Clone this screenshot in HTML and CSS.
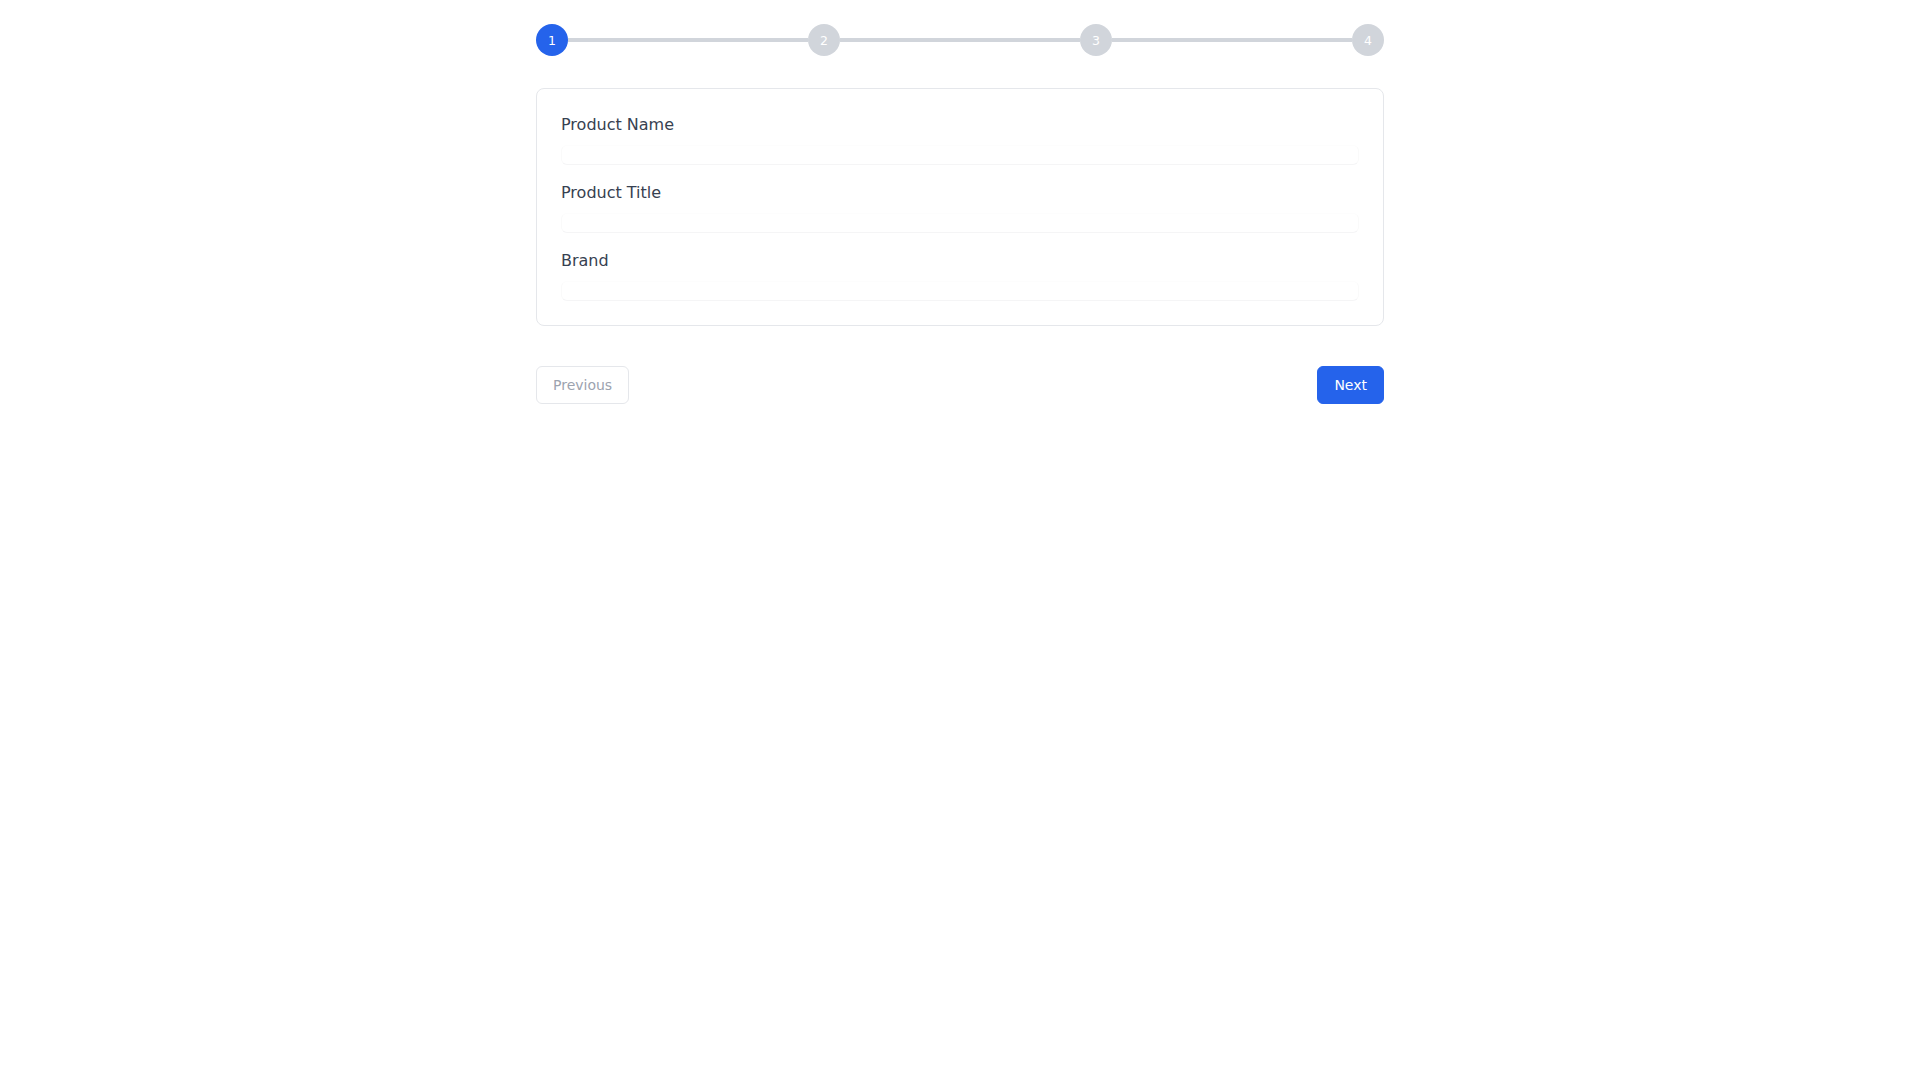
FILE: index.html
```html
<!DOCTYPE html>
<html lang="en">
<head>
<meta charset="utf-8">
<title>Product Wizard</title>
<link rel="stylesheet" href="styles.css">
</head>
<body>
<div class="wizard">
  <div class="stepper">
    <div class="step step-active">1</div>
    <div class="step-line"></div>
    <div class="step">2</div>
    <div class="step-line"></div>
    <div class="step">3</div>
    <div class="step-line"></div>
    <div class="step">4</div>
  </div>
  <div class="card">
    <div class="field">
      <label class="field-label">Product Name</label>
      <input class="field-input" type="text">
    </div>
    <div class="field">
      <label class="field-label">Product Title</label>
      <input class="field-input" type="text">
    </div>
    <div class="field">
      <label class="field-label">Brand</label>
      <input class="field-input" type="text">
    </div>
  </div>
  <div class="actions">
    <button class="btn btn-prev">Previous</button>
    <button class="btn btn-next">Next</button>
  </div>
</div>
</body>
</html>
```

FILE: styles.css
```css
* { box-sizing: border-box; }
html, body { margin: 0; padding: 0; background: #ffffff; }
body { font-family: "DejaVu Sans", sans-serif; color: #374151; }

.wizard {
  width: 848px;
  margin: 0 auto;
  padding-top: 24px;
}

.stepper {
  display: flex;
  align-items: center;
  margin-bottom: 32px;
}
.step {
  width: 32px;
  height: 32px;
  border-radius: 50%;
  background: #d1d5db;
  color: #ffffff;
  font-size: 12.5px;
  display: flex;
  align-items: center;
  justify-content: center;
  flex-shrink: 0;
}
.step-active { background: #2563eb; }
.step-line {
  flex: 1;
  height: 4px;
  background: #d1d5db;
}

.card {
  border: 1px solid #e5e7eb;
  border-radius: 8px;
  padding: 24px;
  display: flex;
  flex-direction: column;
  gap: 16px;
}
.field { display: flex; flex-direction: column; }
.field-label {
  font-size: 16px;
  line-height: 24px;
  color: #374151;
  margin-bottom: 8px;
}
.field-input {
  height: 20px;
  border: 1px solid #fdfdfd;
  border-bottom-color: #f5f5f6;
  border-left-color: #fafafa;
  border-right-color: #fafafa;
  border-radius: 6px;
  background: #ffffff;
  outline: none;
  padding: 0 8px;
  font-family: inherit;
}

.actions {
  margin-top: 40px;
  display: flex;
  justify-content: space-between;
}
.btn {
  font-family: "DejaVu Sans", sans-serif;
  font-size: 14px;
  line-height: 20px;
  padding: 8px 16px;
  border-radius: 6px;
  border: 1px solid transparent;
  cursor: pointer;
}
.btn-prev {
  background: #ffffff;
  border-color: #e5e7eb;
  color: #9ca3af;
}
.btn-next {
  background: #2563eb;
  border-color: #2563eb;
  color: #ffffff;
}
```
